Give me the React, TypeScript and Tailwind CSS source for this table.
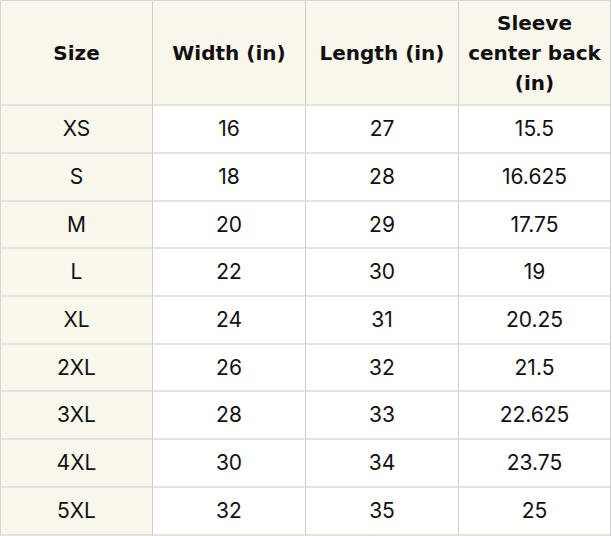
import React from "react";

const rows = [
  ["XS", "16", "27", "15.5"],
  ["S", "18", "28", "16.625"],
  ["M", "20", "29", "17.75"],
  ["L", "22", "30", "19"],
  ["XL", "24", "31", "20.25"],
  ["2XL", "26", "32", "21.5"],
  ["3XL", "28", "33", "22.625"],
  ["4XL", "30", "34", "23.75"],
  ["5XL", "32", "35", "25"],
];
const heights = ["h-[48px]", "h-[48px]", "h-[47px]", "h-[48px]", "h-[48px]", "h-[47px]", "h-[48px]", "h-[48px]", "h-[48px]"];

const headCls =
  "h-[105px] bg-[#f9f7ec] border-r border-b-2 border-r-[#cfcfcf] border-b-[#e4e2dc] flex items-center justify-center text-center font-['DejaVu_Sans',sans-serif] text-[20px] leading-[30px] font-bold text-[#111]";

export default function App() {
  return (
    <div className="w-[612px] h-[536px] bg-white font-['Inter',sans-serif]">
      <div className="w-[611px] border-l border-t border-[#d6d6d6] grid grid-cols-[152px_153px_153px_152px]">
        <div className={headCls}>Size</div>
        <div className={headCls}>Width (in)</div>
        <div className={headCls}>Length (in)</div>
        <div className={headCls}>
          Sleeve<br />center back<br />(in)
        </div>
        {rows.map((r, i) =>
          r.map((c, j) => (
            <div
              key={i + "-" + j}
              className={`${heights[i]} ${j === 0 ? "bg-[#f9f7ec]" : "bg-white"} border-r border-b-2 border-r-[#cfcfcf] border-b-[#e4e2dc] flex items-center justify-center text-[21px] text-[#111]`}
            >
              {c}
            </div>
          ))
        )}
      </div>
    </div>
  );
}
